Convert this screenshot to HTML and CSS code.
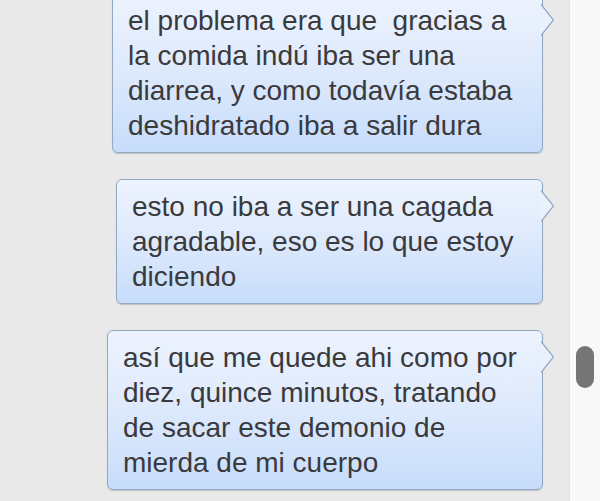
FILE: index.html
```html
<!DOCTYPE html>
<html lang="es">
<head>
    <meta charset="UTF-8">
    <meta name="viewport" content="width=device-width, initial-scale=1.0">
    <title>Mensajes</title>
    <link rel="stylesheet" href="styles.css">
</head>
<body>
    <div class="window">
        <section class="chat">
            <div class="bubble bubble-a">
                el problema era que &nbsp;gracias a<br>
                la comida indú iba ser una<br>
                diarrea, y como todavía estaba<br>
                deshidratado iba a salir dura
                <svg class="tail" width="14" height="32" viewBox="0 0 14 32">
                    <polygon points="0,0.5 12.5,16 0,31.5" fill="#e9f1fd"/>
                    <polyline points="0,0.5 12.5,16 0,31.5" fill="none" stroke="#93a8c3" stroke-width="1.2"/>
                </svg>
            </div>
            <div class="bubble bubble-b">
                esto no iba a ser una cagada<br>
                agradable, eso es lo que estoy<br>
                diciendo
                <svg class="tail" width="14" height="32" viewBox="0 0 14 32">
                    <polygon points="0,0.5 12.5,16 0,31.5" fill="#e9f1fd"/>
                    <polyline points="0,0.5 12.5,16 0,31.5" fill="none" stroke="#93a8c3" stroke-width="1.2"/>
                </svg>
            </div>
            <div class="bubble bubble-c">
                así que me quede ahi como por<br>
                diez, quince minutos, tratando<br>
                de sacar este demonio de<br>
                mierda de mi cuerpo
                <svg class="tail" width="14" height="32" viewBox="0 0 14 32">
                    <polygon points="0,0.5 12.5,16 0,31.5" fill="#e9f1fd"/>
                    <polyline points="0,0.5 12.5,16 0,31.5" fill="none" stroke="#93a8c3" stroke-width="1.2"/>
                </svg>
            </div>
        </section>
        <aside class="scrollbar">
            <div class="thumb"></div>
        </aside>
    </div>
</body>
</html>
```

FILE: styles.css
```css
* {
    margin: 0;
    padding: 0;
    box-sizing: border-box;
}
body {
    font-family: "Liberation Sans", Arial, sans-serif;
    background-color: #e9e9ea;
    color: #3a3a3c;
    overflow: hidden;
}
.window {
    display: flex;
    height: 501px;
}
.chat {
    flex: 1;
    display: flex;
    flex-direction: column;
    align-items: flex-end;
    gap: 26px;
    padding-right: 26px;
    margin-top: -7px;
}
.bubble {
    position: relative;
    white-space: nowrap;
    font-size: 28px;
    line-height: 35px;
    padding: 9px 20px 9px 15px;
    border: 1px solid #93a8c3;
    border-radius: 6px;
    background: linear-gradient(to bottom, #edf3fe 0%, #dde9fc 50%, #c7ddfb 100%);
    box-shadow: 0 1px 1px rgba(0, 0, 0, 0.18);
}
.bubble-a { width: 431px; }
.bubble-b { width: 427px; }
.bubble-c { width: 436px; }
.tail {
    position: absolute;
    top: 10px;
    right: -13px;
}
.scrollbar {
    width: 31px;
    background-color: #f8f8f8;
    border-left: 1px solid #e2e2e3;
    padding: 346px 0 0 6px;
}
.thumb {
    width: 18px;
    height: 42px;
    border-radius: 9px;
    background-color: #757575;
}
```
